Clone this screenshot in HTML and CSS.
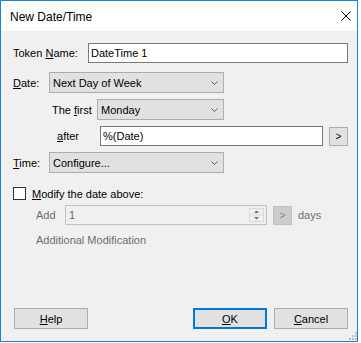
FILE: index.html
```html
<!DOCTYPE html>
<html>
<head>
<meta charset="utf-8">
<link rel="stylesheet" href="styles.css">
</head>
<body>
<div class="window">
  <div class="titlebar">
    <span class="title">New Date/Time</span>
    <svg class="close" width="10" height="10" viewBox="0 0 10 10"><path d="M0.5 0.5L9.5 9.5M9.5 0.5L0.5 9.5" stroke="#000" stroke-width="1" fill="none"/></svg>
  </div>
  <div class="content">
    <div class="row r-token">
      <span class="lbl l-token">Token <u>N</u>ame:</span>
      <div class="textbox tb-token">DateTime 1</div>
    </div>
    <div class="row r-date">
      <span class="lbl l-date"><u>D</u>ate:</span>
      <div class="combo cb-date"><span class="val">Next Day of Week</span><svg class="chev" width="7" height="4" viewBox="0 0 7 4"><path d="M0.5 0.5L3.5 3.5L6.5 0.5" stroke="#606060" fill="none"/></svg></div>
    </div>
    <div class="row r-first">
      <span class="lbl l-first">The <u>f</u>irst</span>
      <div class="combo cb-first"><span class="val">Monday</span><svg class="chev" width="7" height="4" viewBox="0 0 7 4"><path d="M0.5 0.5L3.5 3.5L6.5 0.5" stroke="#606060" fill="none"/></svg></div>
    </div>
    <div class="row r-after">
      <span class="lbl l-after"><u>a</u>fter</span>
      <div class="textbox tb-after">%(Date)</div>
      <div class="btn small">&gt;</div>
    </div>
    <div class="row r-time">
      <span class="lbl l-date"><u>T</u>ime:</span>
      <div class="combo cb-date"><span class="val">Configure...</span><svg class="chev" width="7" height="4" viewBox="0 0 7 4"><path d="M0.5 0.5L3.5 3.5L6.5 0.5" stroke="#606060" fill="none"/></svg></div>
    </div>
    <div class="row r-check">
      <span class="checkbox"></span>
      <span class="lbl"><u>M</u>odify the date above:</span>
    </div>
    <div class="row r-add">
      <span class="lbl dis l-add">Add</span>
      <div class="spin">
        <span class="val">1</span>
        <div class="arrows">
          <svg width="15" height="14" viewBox="0 0 15 14">
            <rect x="0.5" y="0.5" width="14" height="13" fill="#f0f0f0" stroke="#d9d9d9"/>
            <line x1="1" y1="7" x2="14" y2="7" stroke="#d9d9d9"/>
            <path d="M5 5L7.5 2.5L10 5Z" fill="#6d6d6d"/>
            <path d="M5 9L7.5 11.5L10 9Z" fill="#6d6d6d"/>
          </svg>
        </div>
      </div>
      <div class="btn small disabled">&gt;</div>
      <span class="lbl dis days">days</span>
    </div>
    <div class="row r-addl">
      <span class="lbl dis">Additional Modification</span>
    </div>
    <div class="buttons">
      <div class="btn big"><u>H</u>elp</div>
      <div class="right">
        <div class="btn big default"><u>O</u>K</div>
        <div class="btn big"><u>C</u>ancel</div>
      </div>
    </div>
  </div>
  <svg class="grip" width="8" height="8" viewBox="0 0 8 8">
    <rect x="6" y="0" width="2" height="2" fill="#bcbcbc"/>
    <rect x="3" y="3" width="2" height="2" fill="#bcbcbc"/>
    <rect x="6" y="3" width="2" height="2" fill="#bcbcbc"/>
    <rect x="0" y="6" width="2" height="2" fill="#bcbcbc"/>
    <rect x="3" y="6" width="2" height="2" fill="#bcbcbc"/>
    <rect x="6" y="6" width="2" height="2" fill="#bcbcbc"/>
  </svg>
</div>
</body>
</html>
```

FILE: styles.css
```css
html, body {
  margin: 0;
  padding: 0;
  background: #ffffff;
}
body {
  font-family: "Liberation Sans", Arial, sans-serif;
  font-size: 11px;
  color: #000;
}
.window {
  position: relative;
  box-sizing: border-box;
  width: 358px;
  height: 342px;
  border: 1px solid #1883d7;
  display: flex;
  flex-direction: column;
  background: #f0f0f0;
}
.titlebar {
  height: 30px;
  background: #fff;
  display: flex;
  align-items: center;
  padding-left: 9px;
  padding-right: 6px;
}
.title {
  font-size: 12px;
  flex: 1;
  padding-top: 1px;
}
.close {
  margin-right: 0px;
  margin-top: 0px;
}
.content {
  flex: 1;
  display: flex;
  flex-direction: column;
  padding-left: 12px;
}
.row {
  display: flex;
  align-items: center;
}
.lbl {
  white-space: nowrap;
}
u { text-decoration: underline; text-underline-offset: 1px; }
.dis { color: #6d6d6d; }
.r-token { margin-top: 12px; height: 20px; }
.l-token { width: 75px; }
.textbox {
  box-sizing: border-box;
  height: 20px;
  background: #fff;
  border: 1px solid #7a7a7a;
  padding-left: 2px;
  display: flex;
  align-items: center;
}
.tb-token { width: 260px; }
.r-date { margin-top: 9px; height: 21px; }
.l-date { width: 36px; }
.combo {
  box-sizing: border-box;
  height: 21px;
  background: #e1e1e1;
  border: 1px solid #adadad;
  display: flex;
  align-items: center;
  padding-left: 3px;
  padding-right: 5px;
}
.combo .val { flex: 1; }
.cb-date { width: 175px; }
.r-first { margin-top: 6px; height: 21px; }
.l-first { margin-left: 39px; width: 45px; }
.cb-first { width: 127px; }
.r-after { margin-top: 6px; height: 20px; }
.l-after { margin-left: 44px; width: 43px; }
.tb-after { width: 223px; }
.btn {
  box-sizing: border-box;
  background: #e1e1e1;
  border: 1px solid #adadad;
  display: flex;
  align-items: center;
  justify-content: center;
}
.btn.small {
  width: 19px;
  height: 19px;
  margin-left: 6px;
  margin-top: 1px;
  font-size: 10px;
}
.btn.disabled {
  background: #cccccc;
  border-color: #bfbfbf;
  color: #838383;
}
.r-time { margin-top: 6px; height: 21px; }
.r-check { margin-top: 14px; height: 13px; }
.checkbox {
  box-sizing: border-box;
  width: 13px;
  height: 13px;
  background: #fff;
  border: 1px solid #333;
  margin-right: 6px;
}
.r-add { margin-top: 5px; height: 20px; }
.l-add { margin-left: 23px; width: 29px; }
.spin {
  box-sizing: border-box;
  width: 202px;
  height: 20px;
  border: 1px solid #c2c2c2;
  background: #f0f0f0;
  display: flex;
  align-items: center;
  padding-left: 3px;
  padding-right: 2px;
  color: #6d6d6d;
}
.spin .val { flex: 1; }
.arrows { display: flex; }
.arrows svg { display: block; }
.days { margin-left: 6px; }
.r-addl { margin-top: 8px; height: 14px; margin-left: 23px; }
.buttons {
  margin-top: auto;
  margin-bottom: 12px;
  display: flex;
  justify-content: space-between;
  padding-right: 9px;
  padding-left: 1px;
}
.right { display: flex; gap: 7px; }
.btn.big {
  width: 74px;
  height: 21px;
}
.btn.default {
  border: 2px solid #0078d7;
}
.grip {
  position: absolute;
  right: 0px;
  bottom: 1px;
}
```
